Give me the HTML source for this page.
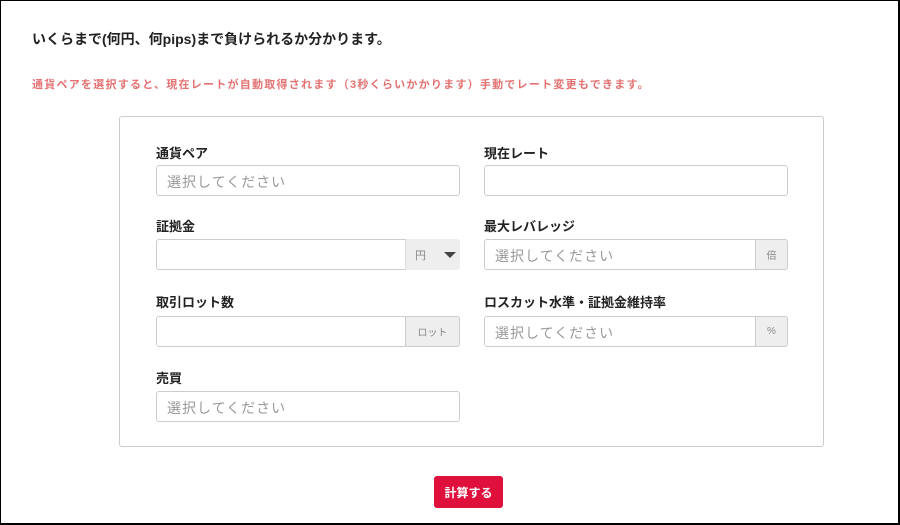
<!DOCTYPE html>
<html><head><meta charset="utf-8"><style>
*{box-sizing:border-box;margin:0;padding:0}
body{width:900px;height:525px;background:#fff;font-family:"Liberation Sans","Noto Sans CJK JP",sans-serif;position:relative;overflow:hidden}
.frame{position:absolute;left:0;top:0;width:900px;height:525px;border:1px solid #000;border-right-width:2px;border-bottom-width:2px}
.t1{position:absolute;left:32px;top:29px;font-size:14px;font-weight:bold;color:#222}
.t2{position:absolute;left:32px;top:76px;font-size:11px;font-weight:bold;color:#e47272;letter-spacing:1.25px;white-space:nowrap}
.panel{position:absolute;left:119px;top:116px;width:705px;height:331px;border:1px solid #ccc;border-radius:3px}
.lb{position:absolute;font-size:13px;font-weight:bold;color:#222}
.in{position:absolute;height:31px;border:1px solid #ccc;border-radius:3px;font-size:14px;color:#999;padding:6px 10px;letter-spacing:1px;background:#fff}
.ad{position:absolute;height:31px;border:1px solid #ccc;background:#eee;border-radius:0 3px 3px 0;font-size:10px;color:#888;display:flex;align-items:center;justify-content:center}
.btn{position:absolute;left:434px;top:476px;width:69px;height:32px;background:#e0103c;border-radius:3px;color:#fff;font-size:12px;font-weight:bold;display:flex;align-items:center;justify-content:center}
</style></head><body>
<div class="frame"></div>
<div class="t1">いくらまで(何円、何pips)まで負けられるか分かります。</div>
<div class="t2">通貨ペアを選択すると、現在レートが自動取得されます（3秒くらいかかります）手動でレート変更もできます。</div>
<div class="panel"></div>
<div class="lb" style="left:156px;top:143px">通貨ペア</div>
<div class="in" style="left:156px;top:165px;width:304px">選択してください</div>
<div class="lb" style="left:484px;top:143px">現在レート</div>
<div class="in" style="left:484px;top:165px;width:304px"></div>
<div class="lb" style="left:156px;top:216px">証拠金</div>
<div class="in" style="left:156px;top:239px;width:250px;border-radius:3px 0 0 3px"></div>
<div class="ad" style="left:405px;top:239px;width:55px;border:none;border-left:1px solid #ddd;justify-content:space-between;padding:0 4px 0 9px;font-size:11px">円<span style="border-left:6px solid transparent;border-right:6px solid transparent;border-top:6px solid #444"></span></div>
<div class="lb" style="left:484px;top:216px">最大レバレッジ</div>
<div class="in" style="left:484px;top:239px;width:272px;border-radius:3px 0 0 3px">選択してください</div>
<div class="ad" style="left:755px;top:239px;width:33px">倍</div>
<div class="lb" style="left:156px;top:292px">取引ロット数</div>
<div class="in" style="left:156px;top:316px;width:250px;border-radius:3px 0 0 3px"></div>
<div class="ad" style="left:405px;top:316px;width:55px;border-radius:3px">ロット</div>
<div class="lb" style="left:484px;top:292px">ロスカット水準・証拠金維持率</div>
<div class="in" style="left:484px;top:316px;width:272px;border-radius:3px 0 0 3px">選択してください</div>
<div class="ad" style="left:755px;top:316px;width:33px">%</div>
<div class="lb" style="left:156px;top:368px">売買</div>
<div class="in" style="left:156px;top:391px;width:304px">選択してください</div>
<div class="btn">計算する</div>
</body></html>
